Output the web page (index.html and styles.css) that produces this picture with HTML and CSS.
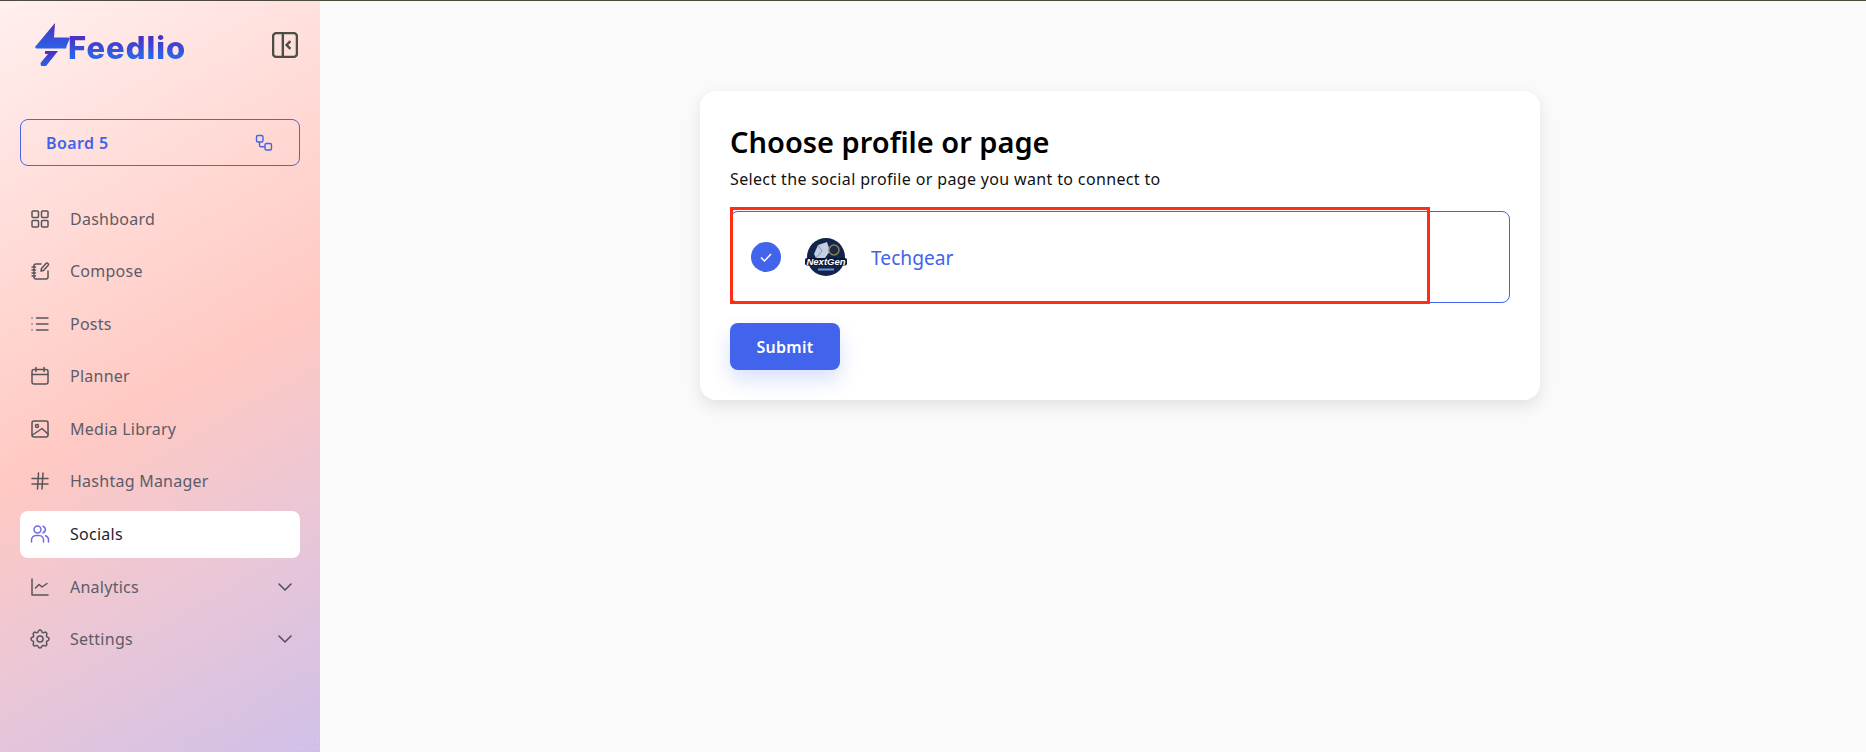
FILE: index.html
```html
<!DOCTYPE html>
<html lang="en">
<head>
    <meta charset="UTF-8">
    <meta name="viewport" content="width=device-width, initial-scale=1.0">
    <title>Feedlio</title>
    <link rel="stylesheet" href="styles.css">
</head>
<body>
    <aside class="sidebar">
        <div class="brand-row">
            <div class="logo">
                <svg class="logo-bolt" viewBox="0 0 36 44" width="36" height="44">
                    <defs>
                        <linearGradient id="bolt" x1="0" y1="0" x2="0" y2="1">
                            <stop offset="0" stop-color="#4a2fc0"/>
                            <stop offset="1" stop-color="#2b62e8"/>
                        </linearGradient>
                    </defs>
                    <path fill="url(#bolt)" d="M21 0 L1 24 L2 25.500 L17 25.500 L32 25.500 L33 22 L36 15 L33.500 14.500 L20 14.500 Z"/>
                    <path fill="url(#bolt)" d="M11 28 L24 28 L12 43 L7 43 L6.500 40 L14 31 L11 31 Z"/>
                </svg>
                <span class="logo-text">Feedlio</span>
            </div>
            <svg class="collapse-icon" viewBox="0 0 24 24" width="26" height="26">
                <rect x="1" y="1" width="22" height="22" rx="3"/>
                <path d="M10 1v22M17 8.500 L13.500 12 L17 15.500"/>
            </svg>
        </div>

        <button class="board-btn" type="button">
            <span>Board 5</span>
            <svg viewBox="0 0 20 20" width="20" height="20">
                <rect x="2.500" y="2.500" width="6.500" height="6.500" rx="1.500"/>
                <rect x="11" y="10.500" width="6.500" height="6.500" rx="1.500"/>
                <path d="M5.500 9 V12.500 Q5.500 13.700 7 13.700 H11"/>
            </svg>
        </button>

        <nav class="menu">
            <a class="menu-item">
                <svg class="icon" viewBox="0 0 24 24"><rect x="4" y="4" width="6.500" height="6.500" rx="1"/><rect x="13.500" y="4" width="6.500" height="6.500" rx="1"/><rect x="4" y="13.500" width="6.500" height="6.500" rx="1"/><rect x="13.500" y="13.500" width="6.500" height="6.500" rx="1"/></svg>
                Dashboard
            </a>
            <a class="menu-item">
                <svg class="icon" viewBox="0 0 24 24"><path d="M13 5 H8 a2 2 0 0 0 -2 2 V18 a2 2 0 0 0 2 2 H18 a2 2 0 0 0 2 -2 V12"/><path d="M4 8h3.500M4 11h3.500M4 14h3.500M4 17h3.500"/><path d="M13 12 L13.500 9.500 L18 4.500 Q19 3.500 20 4.500 Q21 5.500 20 6.500 L15.500 11.500 Z"/></svg>
                Compose
            </a>
            <a class="menu-item">
                <svg class="icon" viewBox="0 0 24 24"><path d="M8.500 6H20M8.500 12H20M8.500 18H20M4 6v.01M4 12v.01M4 18v.01"/></svg>
                Posts
            </a>
            <a class="menu-item">
                <svg class="icon" viewBox="0 0 24 24"><rect x="4" y="5.500" width="16" height="14.500" rx="2"/><path d="M8 3.500v4M16 3.500v4M4 10.500h16"/></svg>
                Planner
            </a>
            <a class="menu-item">
                <svg class="icon" viewBox="0 0 24 24"><rect x="4" y="4" width="16" height="16" rx="2"/><circle cx="9" cy="9" r="1.500"/><path d="M4.500 18 L14 11.500 L20 17"/></svg>
                Media Library
            </a>
            <a class="menu-item">
                <svg class="icon" viewBox="0 0 24 24"><path d="M4 9.500h16M4 15h16M10.500 4 L9.500 20M15 4 L14 20"/></svg>
                Hashtag Manager
            </a>
            <a class="menu-item active">
                <svg class="icon" viewBox="0 0 24 24"><circle cx="9.500" cy="7.500" r="3.500"/><path d="M3.500 20v-2a4.500 4.500 0 0 1 4.500 -4.500h3a4.500 4.500 0 0 1 4.500 4.500v2"/><path d="M15 4.200a3.500 3.500 0 0 1 0 6.600M17.500 13.700a4.500 4.500 0 0 1 3 4.300v2"/></svg>
                Socials
            </a>
            <a class="menu-item">
                <svg class="icon" viewBox="0 0 24 24"><path d="M4 4v16h16M7.500 13 L11 9.500 L14 12 L19 8.500"/></svg>
                Analytics
                <svg class="chevron" viewBox="0 0 24 24"><path d="M6 9 L12 15 L18 9"/></svg>
            </a>
            <a class="menu-item">
                <svg class="icon" viewBox="0 0 24 24"><path d="M10.300 4.300c.4-1.700 3-1.700 3.400 0a1.700 1.700 0 0 0 2.600 1.100c1.500-.9 3.300.8 2.400 2.400a1.700 1.700 0 0 0 1 2.500c1.800.4 1.800 3 0 3.400a1.700 1.700 0 0 0-1 2.600c.9 1.500-.9 3.300-2.400 2.400a1.700 1.700 0 0 0-2.600 1c-.4 1.800-3 1.800-3.400 0a1.700 1.700 0 0 0-2.500-1c-1.600.9-3.300-.9-2.400-2.400a1.700 1.700 0 0 0-1.100-2.600c-1.700-.4-1.700-3 0-3.400a1.700 1.700 0 0 0 1.100-2.500c-.9-1.600.8-3.300 2.400-2.400 1 .6 2.300.1 2.500-1.100z"/><circle cx="12" cy="12" r="3"/></svg>
                Settings
                <svg class="chevron" viewBox="0 0 24 24"><path d="M6 9 L12 15 L18 9"/></svg>
            </a>
        </nav>
    </aside>

    <main class="content">
        <section class="card">
            <h1>Choose profile or page</h1>
            <p class="subtitle">Select the social profile or page you want to connect to</p>
            <div class="profile-option">
                <span class="check">
                    <svg viewBox="0 0 16 16" width="16" height="16"><path d="M3 8.500 L6.500 12 L13 5"/></svg>
                </span>
                <svg class="avatar" viewBox="0 0 42 40" width="42" height="40">
                    <circle cx="21" cy="20" r="19" fill="#12244c"/>
                    <path d="M9 17 L13 8 L22 5 L25 14 L20 21 L11 21 Z" fill="#c3cfe2"/>
                    <path d="M13 8 L17 14 L11 21" fill="none" stroke="#7f94b8"/>
                    <circle cx="29" cy="13" r="5" fill="#1d2a44" stroke="#8d8058" stroke-width="1.500"/>
                    <rect x="0" y="21" width="42" height="7.500" rx="2" fill="#0a1636"/>
                    <text class="avatar-text" x="21" y="27.500" text-anchor="middle">NextGen</text>
                    <path d="M13 32.500h16" stroke="#6f97d4" stroke-width="2"/>
                </svg>
                <span class="profile-name">Techgear</span>
            </div>
            <button class="submit-btn" type="submit">Submit</button>
            <div class="annotation"></div>
        </section>
    </main>
</body>
</html>
```

FILE: styles.css
```css
* {
    box-sizing: border-box;
}
html, body {
    height: 100%;
}
body {
    margin: 0;
    display: flex;
    overflow: hidden;
    background-color: #fafafa;
    border-top: 1px solid #4b4a3c;
    font-family: 'Noto Sans', sans-serif;
    color: #000;
}

/* sidebar */
.sidebar {
    position: relative;
    width: 320px;
    flex-shrink: 0;
    padding: 0 20px;
    background: linear-gradient(150deg, #fff0ee 0%, #ffd9d5 30%, #ffc9c3 52%, #e8c6d8 76%, #d0c0e8 100%);
}
/* dotted corner of the backdrop */
.sidebar::after {
    content: "";
    position: absolute;
    right: 0;
    bottom: 0;
    width: 40px;
    height: 17px;
    background-image: radial-gradient(circle, rgba(255, 255, 255, 0.3) 0.7px, transparent 1px);
    background-size: 5px 5px;
    clip-path: polygon(100% 0, 100% 100%, 0 100%);
}
.brand-row {
    display: flex;
    align-items: center;
    justify-content: space-between;
    height: 118px;
    padding: 0 2px 31px 14px;
}
.logo {
    display: flex;
    align-items: flex-end;
}
.logo-bolt {
    display: block;
    margin-right: -2px;
}
.logo-text {
    margin-bottom: 1px;
    font-family: 'Inter', sans-serif;
    font-size: 31px;
    font-weight: 800;
    line-height: 36px;
    letter-spacing: 1px;
    background: linear-gradient(180deg, #4a34c4 25%, #2b62e8 70%);
    -webkit-background-clip: text;
    background-clip: text;
    color: transparent;
}
.collapse-icon {
    fill: none;
    stroke: #4d4d47;
    stroke-width: 2.200;
}
.board-btn {
    display: flex;
    align-items: center;
    justify-content: space-between;
    width: 280px;
    height: 47px;
    padding: 0 25px;
    background: transparent;
    border: 1px solid #4f63e6;
    border-radius: 8px;
    color: #4263eb;
    font-family: inherit;
    font-size: 16px;
    font-weight: 600;
    letter-spacing: 0.4px;
}
.board-btn svg {
    fill: none;
    stroke: #4263eb;
    stroke-width: 1.4;
}
.menu {
    display: flex;
    flex-direction: column;
    gap: 5.600px;
    margin-top: 29px;
}
.menu-item {
    display: flex;
    align-items: center;
    gap: 18px;
    height: 47px;
    padding: 0 3px 0 8px;
    border-radius: 8px;
    font-size: 16px;
    letter-spacing: 0.25px;
    color: #5c5c68;
}
.menu-item.active {
    background-color: #fff;
    color: #1c2434;
}
.icon {
    width: 24px;
    height: 24px;
    flex-shrink: 0;
    fill: none;
    stroke: #55555a;
    stroke-width: 1.5;
    stroke-linecap: round;
    stroke-linejoin: round;
}
.active .icon {
    stroke: #6f6be0;
}
.chevron {
    width: 24px;
    height: 24px;
    margin-left: auto;
    fill: none;
    stroke: #4d4d52;
    stroke-width: 1.500;
    stroke-linecap: round;
    stroke-linejoin: round;
}

/* main */
.content {
    flex: 1;
    padding: 90px 0 0 380px;
}
.card {
    position: relative;
    width: 840px;
    height: 309px;
    padding: 30px;
    background-color: #fff;
    border-radius: 16px;
    box-shadow: 0 6px 16px rgba(0, 0, 0, 0.1);
}
h1 {
    margin: 0;
    font-size: 29px;
    line-height: 42px;
    font-weight: 600;
    color: #000;
}
.subtitle {
    margin: 4px 0 0;
    font-size: 16px;
    line-height: 24px;
    letter-spacing: 0.35px;
    color: #111;
}
.profile-option {
    display: flex;
    align-items: center;
    height: 92px;
    margin-top: 20px;
    padding-left: 20px;
    border: 1px solid #4263eb;
    border-radius: 8px;
}
.check {
    display: flex;
    align-items: center;
    justify-content: center;
    width: 30px;
    height: 30px;
    border-radius: 50%;
    background-color: #4263eb;
}
.check svg {
    fill: none;
    stroke: #fff;
    stroke-width: 1.5;
}
.avatar {
    margin-left: 24px;
}
.avatar-text {
    font-family: 'Liberation Sans', sans-serif;
    font-size: 9.500px;
    font-weight: 700;
    font-style: italic;
    fill: #fff;
}
.profile-name {
    margin-left: 24px;
    font-size: 19.200px;
    color: #4263eb;
}
.submit-btn {
    display: block;
    width: 110px;
    height: 47px;
    margin-top: 20px;
    border: none;
    border-radius: 8px;
    background-color: #4263eb;
    color: #fff;
    font-family: inherit;
    font-size: 16px;
    font-weight: 600;
    letter-spacing: 0.3px;
    box-shadow: 0 10px 20px rgba(66, 99, 235, 0.2);
}

/* red box drawn over the screenshot */
.annotation {
    position: absolute;
    left: 30px;
    top: 116px;
    width: 700px;
    height: 97px;
    border: 3px solid #ff2d14;
}
```
